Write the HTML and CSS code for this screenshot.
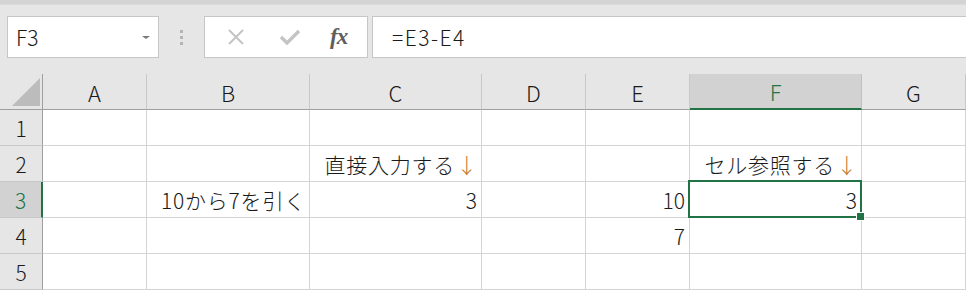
FILE: index.html
```html
<!DOCTYPE html>
<html lang="ja">
<head>
  <meta charset="UTF-8">
  <title>セル参照</title>
  <link rel="stylesheet" href="styles.css">
</head>
<body>
  <div class="app">
    <div class="topstrip"></div>

    <div class="formulabar">
      <div class="namebox">
        <span class="ref">F3</span>
        <span class="drop"></span>
      </div>
      <div class="grip"><i></i><i></i><i></i></div>
      <div class="fxbtns">
        <svg class="ico" width="20" height="16" viewBox="0 0 20 16">
          <path d="M3 1 L17 15 M17 1 L3 15" stroke="#c4c4c4" stroke-width="2" fill="none"/>
        </svg>
        <svg class="ico" width="22" height="16" viewBox="0 0 22 16">
          <path d="M2 8 L8 14 L20 2" stroke="#c4c4c4" stroke-width="3.4" fill="none"/>
        </svg>
        <span class="fx">fx</span>
      </div>
      <div class="formula">=E3-E4</div>
    </div>

    <div class="sheet">
      <!-- 見出し行 -->
      <div class="corner">
        <svg width="28" height="28" viewBox="0 0 28 28"><polygon points="0,28 28,28 28,0" fill="#bcbcbc"/></svg>
      </div>
      <div class="ch">A</div>
      <div class="ch">B</div>
      <div class="ch">C</div>
      <div class="ch">D</div>
      <div class="ch">E</div>
      <div class="ch sel">F</div>
      <div class="ch">G</div>

      <!-- 1 -->
      <div class="rh">1</div>
      <div class="c"></div><div class="c"></div><div class="c"></div><div class="c"></div><div class="c"></div><div class="c"></div><div class="c"></div>

      <!-- 2 -->
      <div class="rh">2</div>
      <div class="c"></div>
      <div class="c"></div>
      <div class="c r jp">直接入力する<span class="arrow">↓</span></div>
      <div class="c"></div>
      <div class="c"></div>
      <div class="c r jp">セル参照する<span class="arrow">↓</span></div>
      <div class="c"></div>

      <!-- 3 -->
      <div class="rh sel">3</div>
      <div class="c"></div>
      <div class="c r jp">10から7を引く</div>
      <div class="c r">3</div>
      <div class="c"></div>
      <div class="c r">10</div>
      <div class="c r active">3</div>
      <div class="c"></div>

      <!-- 4 -->
      <div class="rh">4</div>
      <div class="c"></div><div class="c"></div><div class="c"></div><div class="c"></div>
      <div class="c r">7</div>
      <div class="c"></div><div class="c"></div>

      <!-- 5 -->
      <div class="rh">5</div>
      <div class="c"></div><div class="c"></div><div class="c"></div><div class="c"></div><div class="c"></div><div class="c"></div><div class="c"></div>
    </div>
  </div>
</body>
</html>
```

FILE: styles.css
```css
* { box-sizing: border-box; }

body {
  margin: 0;
  background-color: #e6e6e6;
  font-family: "Noto Sans CJK JP", "Noto Sans", sans-serif;
  font-weight: 300;
  color: #1a1a1a;
}

.app {
  width: 966px;
  height: 290px;
  overflow: hidden;
}

/* 上の帯 */
.topstrip {
  height: 5px;
  background-color: #d4d4d4;
  border-bottom: 1px solid #dcdcdc;
}

/* 数式バー */
.formulabar {
  display: flex;
  align-items: stretch;
  height: 42px;
  margin-top: 11px;
  padding-left: 7px;
}

.namebox {
  width: 152px;
  background-color: #fff;
  border: 1px solid #c6c6c6;
  display: flex;
  align-items: center;
  justify-content: space-between;
  padding: 0 8px 0 8px;
}
.namebox .ref {
  font-size: 21px;
}
.namebox .drop {
  width: 0;
  height: 0;
  border-left: 4px solid transparent;
  border-right: 4px solid transparent;
  border-top: 3px solid #7a7a7a;
  margin-top: 1px;
}

.grip {
  width: 45px;
  display: flex;
  flex-direction: column;
  align-items: center;
  justify-content: center;
  gap: 3px;
  padding-right: 1px;
}
.grip i {
  display: block;
  width: 3px;
  height: 3px;
  background-color: #b4b4b4;
}

.fxbtns {
  width: 164px;
  background-color: #fff;
  border: 1px solid #c6c6c6;
  display: flex;
  align-items: center;
  padding-left: 21px;
}
.fxbtns .ico { display: block; }
.fxbtns .ico + .ico { margin-left: 33px; }
.fxbtns .fx {
  margin-left: 29px;
  font-family: "Liberation Serif", serif;
  font-style: italic;
  font-weight: bold;
  font-size: 23px;
  color: #5e5e5e;
  letter-spacing: -1px;
  margin-top: -1px;
}

.formula {
  flex: 1;
  margin-left: 4px;
  margin-right: -2px;
  background-color: #fff;
  border: 1px solid #c6c6c6;
  display: flex;
  align-items: center;
  padding-left: 19px;
  font-size: 21px;
  letter-spacing: 1.5px;
}

/* シート */
.sheet {
  margin-top: 16px;
  display: grid;
  grid-template-columns: 43px 104px 163px 172px 104px 104px 172px 104px;
  grid-template-rows: repeat(6, 36px);
  background-color: #fff;
  font-size: 21px;
}

.corner {
  background-color: #e6e6e6;
  border-right: 1px solid #9f9f9f;
  border-bottom: 1px solid #9f9f9f;
  display: flex;
  align-items: flex-end;
  justify-content: flex-end;
  padding: 0 2px 3px 0;
}
.corner svg { display: block; }

.ch {
  background-color: #e6e6e6;
  border-right: 1px solid #c8c8c8;
  border-bottom: 1px solid #9f9f9f;
  display: flex;
  align-items: center;
  justify-content: center;
  font-size: 22px;
}
.ch.sel {
  background-color: #d2d2d2;
  color: #217346;
  border-right-color: #c0c0c0;
  border-bottom: 2px solid #217346;
}

.rh {
  background-color: #e6e6e6;
  border-right: 1px solid #9f9f9f;
  border-bottom: 1px solid #c8c8c8;
  display: flex;
  align-items: center;
  justify-content: center;
}
.rh.sel {
  background-color: #d2d2d2;
  color: #217346;
  border-right: 2px solid #217346;
}

.c {
  border-right: 1px solid #d4d4d4;
  border-bottom: 1px solid #d4d4d4;
  display: flex;
  align-items: center;
  padding: 0 4px;
  white-space: nowrap;
}
.c.r { justify-content: flex-end; }
.c.jp { letter-spacing: 0.8px; padding-right: 3px; }

.arrow {
  color: #c47a34;
  margin-left: 1px;
}

/* 選択セル */
.c.active {
  position: relative;
  overflow: visible;
}
.c.active::before {
  content: "";
  position: absolute;
  top: -2px;
  left: -2px;
  right: -1px;
  bottom: -1px;
  border: 2px solid #217346;
  pointer-events: none;
}
.c.active::after {
  content: "";
  position: absolute;
  right: -4px;
  bottom: -4px;
  width: 7px;
  height: 7px;
  background-color: #217346;
  border: 1px solid #fff;
  z-index: 2;
}
```
